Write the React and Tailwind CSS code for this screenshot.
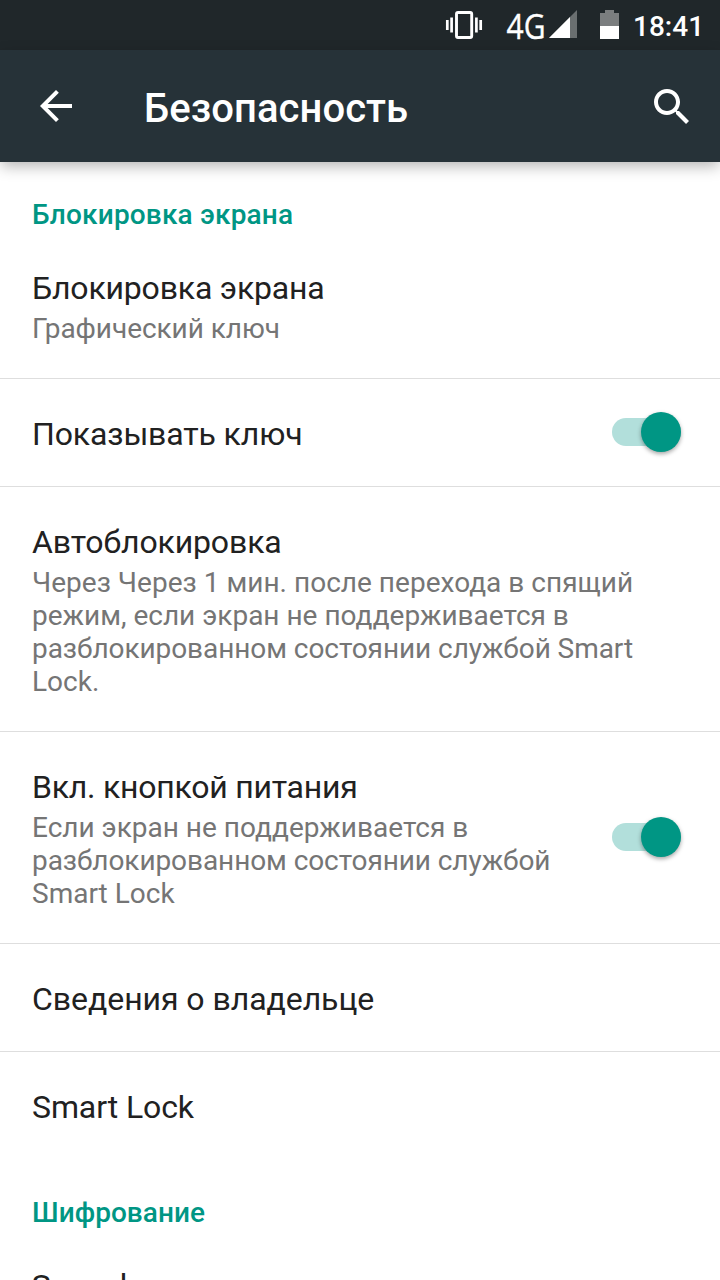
import React from "react";

function VibrateIcon() {
  return (
    <svg className="block h-[28px] w-[38px]" viewBox="0 0 38 28" fill="none" stroke="#fff">
      <rect x="11.5" y="1.5" width="15.2" height="25" rx="1.5" strokeWidth="2.9" />
      <path d="M2.3 9v10M35.7 9v10" strokeWidth="2.7" />
      <path d="M6.6 6.500v15M31.400 6.500v15" strokeWidth="2.7" />
    </svg>
  );
}

function SignalIcon() {
  return (
    <svg className="block h-[28px] w-[28px]" viewBox="0 0 28 28">
      <path d="M28 0v28H0z" fill="#6a6f70" />
      <path d="M21 7v21H0z" fill="#fff" />
    </svg>
  );
}

function BatteryIcon() {
  return (
    <svg className="block h-[29px] w-[19px]" viewBox="0 0 19 29">
      <path d="M5 0h9v3h5v13H0V3h5z" fill="#7b7e7f" />
      <path d="M0 16h19v13H0z" fill="#fff" />
    </svg>
  );
}

function StatusBar() {
  return (
    <div className="flex h-[50px] items-start bg-[#20272a] pl-[445px] pt-[10px] text-white">
      <div className="pt-[1px]">
        <VibrateIcon />
      </div>
      <svg className="ml-[23px] block h-[36px] w-[40px] overflow-visible" viewBox="0 0 40 36">
        <text x="0.5" y="28.500" fill="#fff" stroke="#fff" strokeWidth="0.4" fontFamily="'Open Sans', sans-serif" fontSize="35.500" textLength="39" lengthAdjust="spacingAndGlyphs">
          4G
        </text>
      </svg>
      <div className="ml-[3px]">
        <SignalIcon />
      </div>
      <div className="ml-[23px]">
        <BatteryIcon />
      </div>
      <span className="ml-[14px] text-[28px] font-medium leading-[33px]">18:41</span>
    </div>
  );
}

function Toolbar() {
  return (
    <header className="relative flex h-[112px] items-center bg-[#263238] text-white shadow-[0_5px_14px_-1px_rgba(0,0,0,0.3)]">
      <svg className="ml-[40px] block h-[32px] w-[32px]" viewBox="4 4 16 16" fill="#fff">
        <path d="M20 11H7.830l5.590-5.590L12 4l-8 8 8 8 1.410-1.410L7.830 13H20v-2z" />
      </svg>
      <h1 className="ml-[72px] pt-[5px] text-[40px] font-medium leading-[47px] tracking-[0.07px]">Безопасность</h1>
      <svg className="ml-auto mr-[31px] block h-[35px] w-[35px]" viewBox="3 3 17.490 17.490" fill="#fff">
        <path d="M15.500 14h-.79l-.28-.27C15.410 12.590 16 11.110 16 9.500 16 5.910 13.090 3 9.500 3S3 5.910 3 9.500 5.910 16 9.500 16c1.610 0 3.090-.59 4.230-1.570l.27.28v.79l5 4.990L20.490 19l-4.990-5zm-6 0C7.010 14 5 11.990 5 9.500S7.010 5 9.500 5 14 7.010 14 9.500 11.990 14 9.500 14z" />
      </svg>
    </header>
  );
}

function Toggle() {
  return (
    <div className="mb-[1px] mr-[7px] flex h-[28px] w-[69px] items-center justify-end rounded-full bg-[#b2dfdb]">
      <div className="h-[40px] w-[40px] shrink-0 rounded-full bg-[#009684] shadow-[0_2px_4px_rgba(0,0,0,0.35)]" />
    </div>
  );
}

function SectionHeader({ tracking, children }) {
  return <h2 className={`text-[28px] font-medium leading-[33px] text-[#009684] ${tracking}`}>{children}</h2>;
}

function Row({ title, tracking = "tracking-[-0.13px]", lines = [], on, last }) {
  return (
    <div className={`flex items-center px-[32px] ${last ? "" : "border-b border-[#dedede]"}`}>
      <div className="flex-1 pb-[33px] pt-[36px]">
        <div className={`whitespace-nowrap text-[32px] leading-[38px] text-[#212121] ${tracking}`}>{title}</div>
        {lines.length > 0 && (
          <div className="mt-[5px] whitespace-nowrap text-[28px] leading-[33px] text-[#757575]">
            {lines.map(([text, lineTracking]) => (
              <div key={text} className={lineTracking}>
                {text}
              </div>
            ))}
          </div>
        )}
      </div>
      {on && <Toggle />}
    </div>
  );
}

export default function App() {
  return (
    <div className="h-[1280px] w-[720px] overflow-hidden bg-white font-[Roboto,sans-serif]">
      <StatusBar />
      <Toolbar />
      <main>
        <div className="px-[32px] pb-[2px] pt-[36px]">
          <SectionHeader tracking="tracking-[0.18px]">Блокировка экрана</SectionHeader>
        </div>
        <Row
          title="Блокировка экрана"
          tracking="tracking-[-0.18px]"
          lines={[["Графический ключ", "tracking-[-0.05px]"]]}
        />
        <Row title="Показывать ключ" on />
        <Row
          title="Автоблокировка"
          lines={[
            ["Через Через 1 мин. после перехода в спящий", "tracking-[0.02px]"],
            ["режим, если экран не поддерживается в", ""],
            ["разблокированном состоянии службой Smart", "tracking-[-0.07px]"],
            ["Lock.", ""],
          ]}
        />
        <Row
          title="Вкл. кнопкой питания"
          tracking="tracking-[-0.23px]"
          lines={[
            ["Если экран не поддерживается в", ""],
            ["разблокированном состоянии службой", "tracking-[-0.08px]"],
            ["Smart Lock", ""],
          ]}
          on
        />
        <Row title="Сведения о владельце" tracking="tracking-[-0.05px]" />
        <Row title="Smart Lock" tracking="tracking-[-0.1px]" last />
        <div className="px-[32px] pb-[2px] pt-[37px]">
          <SectionHeader tracking="tracking-[0.05px]">Шифрование</SectionHeader>
        </div>
        <Row title="Зашифровать данные" tracking="tracking-[-0.2px]" last />
      </main>
    </div>
  );
}
